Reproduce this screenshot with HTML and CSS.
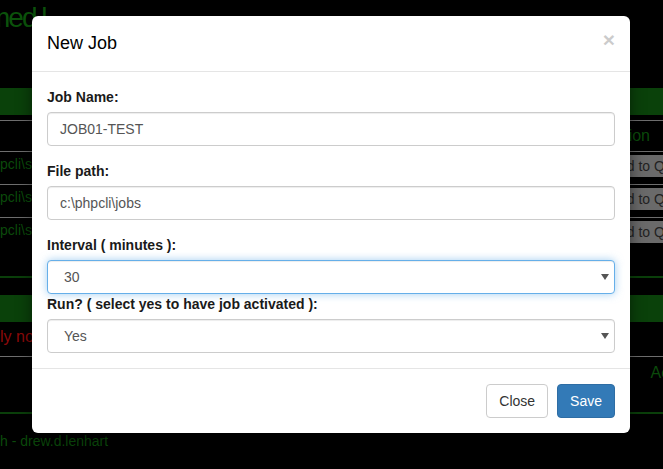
FILE: index.html
```html
<!DOCTYPE html>
<html lang="en">
<head>
<meta charset="utf-8">
<title>New Job</title>
<link rel="stylesheet" href="styles.css">
</head>
<body>
<div class="page">
  <div class="title">med.l</div>
  <section class="panel">
    <div class="bar"></div>
    <div class="table">
      <div class="row head"><span class="path"></span><span class="col-action">Action</span></div>
      <div class="row"><span class="path">pcli\scripts\job1.php</span><span class="qbtn">Add to Queue</span></div>
      <div class="row"><span class="path">pcli\scripts\job2.php</span><span class="qbtn">Add to Queue</span></div>
      <div class="row"><span class="path">pcli\scripts\job3.php</span><span class="qbtn">Add to Queue</span></div>
    </div>
  </section>
  <div class="panel-line"></div>
  <section class="panel two">
    <div class="bar"></div>
    <div class="msg">ly no jobs in queue</div>
    <div class="row2"><span class="path"></span><span class="col-act2">Actions</span></div>
  </section>
  <div class="panel-line"></div>
  <footer class="credit">h - drew.d.lenhart</footer>
</div>

<div class="modal">
  <div class="modal-header">
    <h4 class="modal-title">New Job</h4>
    <span class="close">&times;</span>
  </div>
  <div class="modal-body">
    <div class="form-group">
      <label>Job Name:</label>
      <div class="form-control">JOB01-TEST</div>
    </div>
    <div class="form-group">
      <label>File path:</label>
      <div class="form-control">c:\phpcli\jobs</div>
    </div>
    <div class="form-group tight">
      <label>Interval ( minutes ):</label>
      <div class="form-control select focus"><span class="val">30</span><svg class="caret" width="8" height="6" viewBox="0 0 8 6"><path d="M0 0H8L4 6Z" fill="#555"/></svg></div>
    </div>
    <div class="form-group last">
      <label>Run? ( select yes to have job activated ):</label>
      <div class="form-control select"><span class="val">Yes</span><svg class="caret" width="8" height="6" viewBox="0 0 8 6"><path d="M0 0H8L4 6Z" fill="#555"/></svg></div>
    </div>
  </div>
  <div class="modal-footer">
    <span class="btn btn-default">Close</span>
    <span class="btn btn-primary">Save</span>
  </div>
</div>
</body>
</html>
```

FILE: styles.css
```css
html, body {
  margin: 0;
  padding: 0;
  background: #000;
  overflow: hidden;
  height: 469px;
}
body {
  font-family: "Liberation Sans", Arial, sans-serif;
  font-size: 14px;
}
.page {
  width: 663px;
}
.title {
  font-size: 28px;
  line-height: 36px;
  height: 36px;
  margin: 0 0 52px -13px;
  color: #0b520b;
  letter-spacing: -2px;
  white-space: nowrap;
}
.bar {
  height: 27px;
  background: #0a410a;
}
.table {
  padding-top: 5px;
}
.row {
  display: flex;
  justify-content: space-between;
  align-items: flex-start;
  height: 33px;
  box-sizing: border-box;
  border-top: 1px solid #6e6e6e;
}
.row.head {
  height: 31px;
  align-items: center;
}
.path {
  color: #0b4a0b;
  line-height: 20px;
  padding-top: 2px;
  white-space: nowrap;
}
.col-action {
  color: #0b4a0b;
  font-size: 16px;
  margin-right: 13px;
}
.qbtn {
  margin-top: 3px;
  margin-right: -38px;
  padding: 1px 5px;
  line-height: 20px;
  background: #6a6a6a;
  color: #222;
  border-radius: 3px;
  white-space: nowrap;
}
.panel {
  padding-bottom: 26px;
}
.panel.two {
  padding-bottom: 0;
  height: 117px;
}
.panel-line {
  height: 2px;
  background: #0a3f0a;
  margin-bottom: 17px;
}
.msg {
  color: #8c0a0a;
  font-size: 16px;
  line-height: 20px;
  padding: 5px 0 9px;
  border-bottom: 1px solid #6e6e6e;
  white-space: nowrap;
}
.row2 {
  display: flex;
  justify-content: space-between;
  padding-top: 6px;
}
.col-act2 {
  color: #0b4a0b;
  font-size: 16px;
  line-height: 20px;
  margin-right: -40px;
}
.credit {
  color: #0b4a0b;
  font-size: 14px;
  line-height: 20px;
  margin-top: 6px;
}

/* modal */
.modal {
  position: absolute;
  top: 16px;
  left: 32px;
  width: 598px;
  background: #fff;
  border-radius: 6px;
  box-shadow: 0 5px 15px rgba(0, 0, 0, .5);
  color: #333;
}
.modal-header {
  display: flex;
  justify-content: space-between;
  align-items: flex-start;
  padding: 15px;
  border-bottom: 1px solid #e5e5e5;
}
.modal-title {
  margin: 0;
  font-size: 18px;
  font-weight: normal;
  line-height: 25px;
  color: #000;
}
.close {
  font-size: 21px;
  font-weight: bold;
  line-height: 1;
  color: #000;
  opacity: .2;
  margin-top: -2px;
}
.modal-body {
  padding: 15px;
}
.form-group {
  margin-bottom: 15px;
}
.form-group.tight,
.form-group.last {
  margin-bottom: 0;
}
label {
  display: block;
  font-weight: bold;
  font-size: 14px;
  line-height: 20px;
  margin-bottom: 5px;
  color: #1a1a1a;
}
.form-control {
  box-sizing: border-box;
  width: 100%;
  height: 34px;
  padding: 6px 12px;
  font-size: 14px;
  line-height: 20px;
  color: #555;
  background: #fff;
  border: 1px solid #ccc;
  border-radius: 4px;
  box-shadow: inset 0 1px 1px rgba(0, 0, 0, .075);
}
.select {
  display: flex;
  justify-content: space-between;
  align-items: center;
  padding-left: 16px;
  padding-right: 5px;
}
.focus {
  border-color: #66afe9;
  box-shadow: inset 0 1px 1px rgba(0, 0, 0, .075), 0 0 8px rgba(102, 175, 233, .6);
}
.caret {
  display: block;
}
.modal-footer {
  display: flex;
  justify-content: flex-end;
  gap: 9px;
  padding: 15px;
  border-top: 1px solid #e5e5e5;
}
.btn {
  display: inline-block;
  padding: 6px 12px;
  font-size: 14px;
  line-height: 20px;
  border: 1px solid transparent;
  border-radius: 4px;
}
.btn-default {
  color: #333;
  background: #fff;
  border-color: #ccc;
}
.btn-primary {
  color: #fff;
  background: #337ab7;
  border-color: #2e6da4;
}
```
